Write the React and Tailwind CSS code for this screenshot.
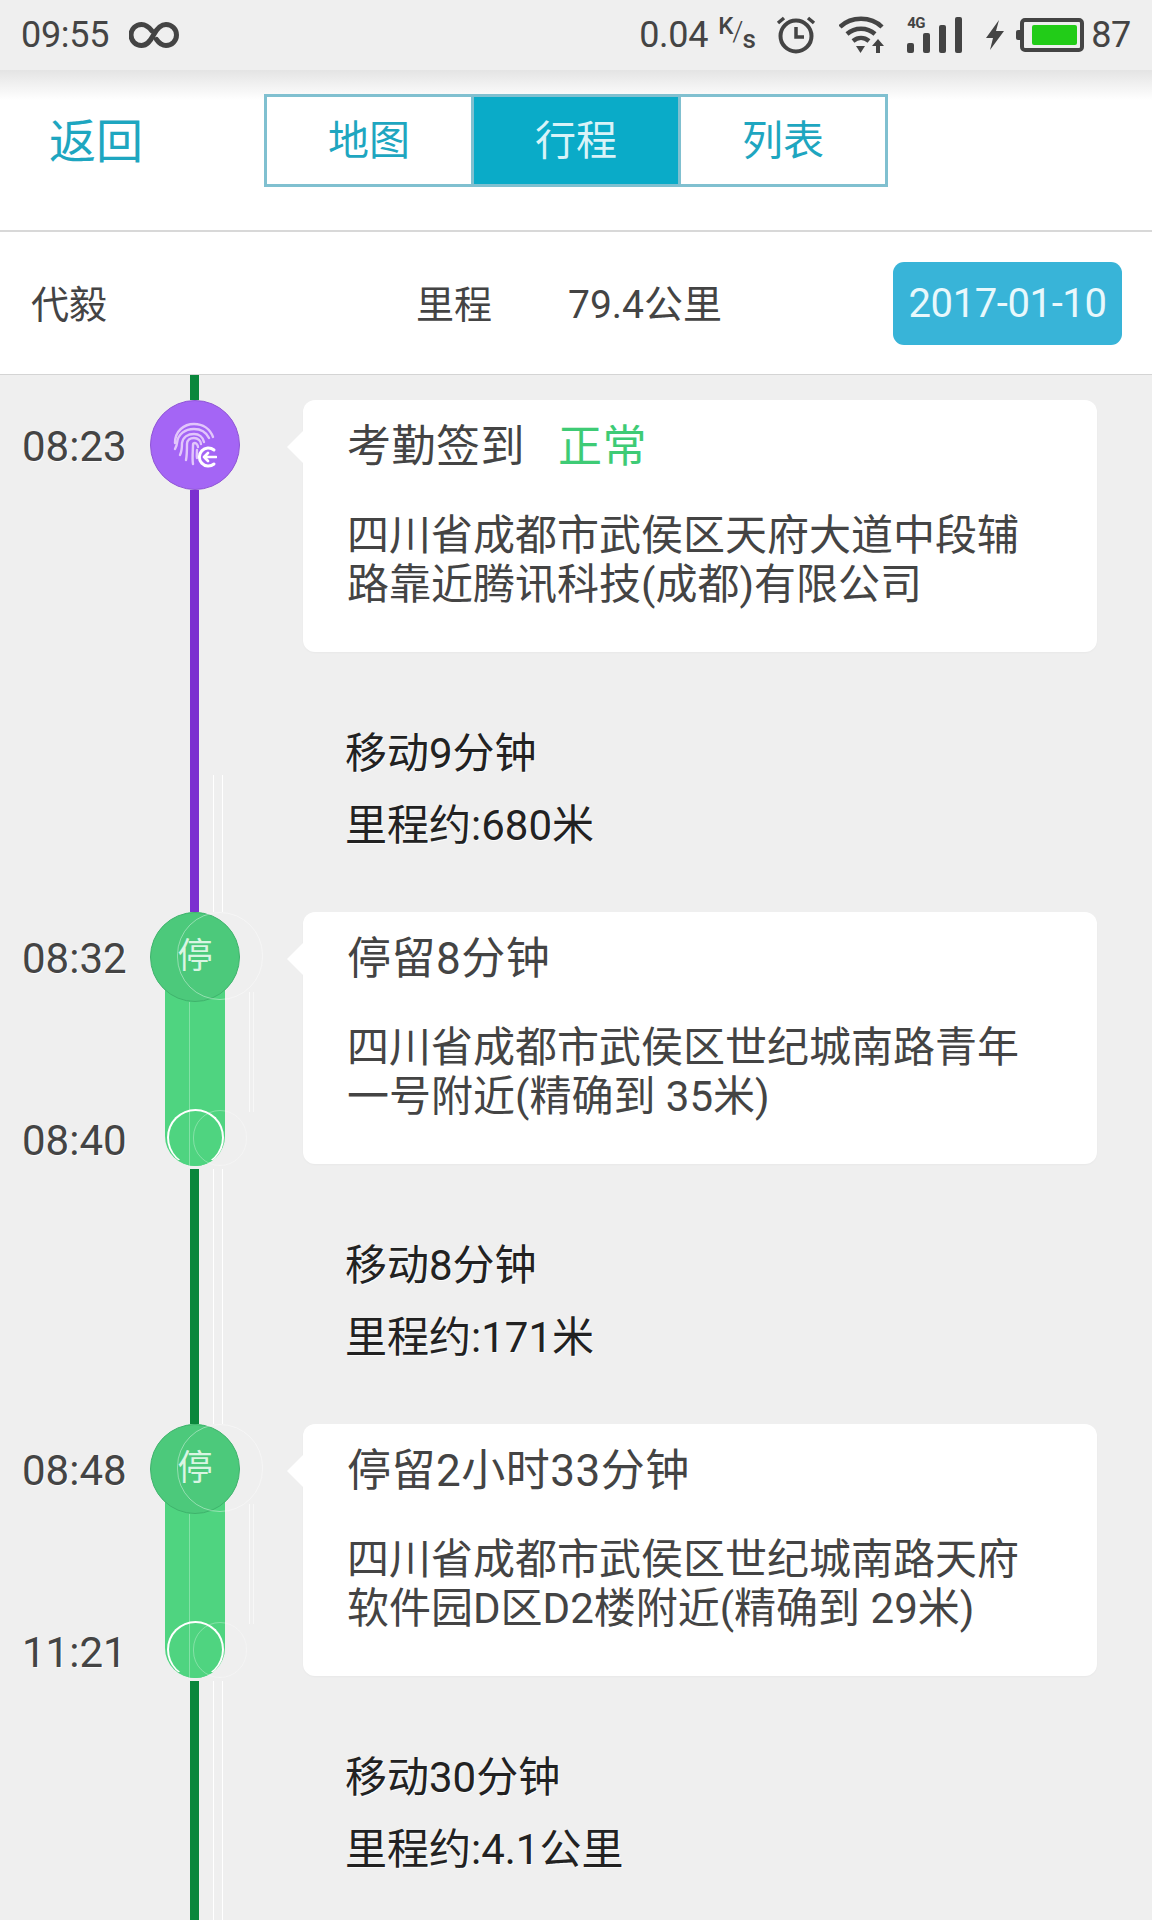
import React from "react";

const FONT = { fontFamily: '"Roboto", "Noto Sans CJK SC", sans-serif' };

const LoopIcon = () => (
  <svg width="50" height="28" viewBox="0 0 50 28" fill="none" stroke="#444" strokeWidth="5" strokeLinecap="round">
    <path d="M23 10C20 6 17 3.500 12.500 3.500a10.500 10.500 0 0 0 0 21c5.500 0 8.500-4 12-10.500 3.500-6.500 7-10.500 12.500-10.500a10.500 10.500 0 0 1 0 21c-4.500 0-7-2.500-9.500-6" />
  </svg>
);

const FingerprintMark = () => (
  <svg width="44" height="46" viewBox="0 0 44 46" fill="none" strokeLinecap="round">
    <g stroke="#e2c6fb" strokeWidth="2.4">
      <path d="M2 21C2 9 11 2 21 2c9 0 16 5 19 13" />
      <path d="M2 27c1-2 2-4 2-6C5 12 12 7 21 7c7 0 12 3 15 9" />
      <path d="M7 33c2-4 2-8 2-12 1-6 6-9 12-9 5 0 9 3 10 8" />
      <path d="M13 38c1-5 1-11 1-16 0-4 3-6 7-6s7 3 7 6" />
      <path d="M20 42c-1-6 0-13 0-19 0-1 1-2 2-2s3 2 3 4" />
      <path d="M24 36c-.5-3 0-6 0-8" />
    </g>
    <path d="M41 28a9 9 0 1 0 0 14" stroke="#ffffff" strokeWidth="3" />
    <path d="M43 35H31m4-4-4 4 4 4" stroke="#ffffff" strokeWidth="2.6" strokeLinejoin="round" />
  </svg>
);

const AlarmIcon = () => (
  <svg width="40" height="40" viewBox="0 0 40 40" fill="none" stroke="#444">
    <circle cx="20" cy="21" r="15.5" strokeWidth="4" />
    <path d="M20 12v10h8" strokeWidth="3.5" />
    <path d="M2 8l6-5M38 8l-6-5" strokeWidth="3.5" />
  </svg>
);

const WifiIcon = () => (
  <svg width="46" height="38" viewBox="0 0 46 38" fill="none">
    <g stroke="#444" strokeWidth="4.5">
      <path d="M1 11C12 0 32 0 43 11" />
      <path d="M8 18c8-7 20-7 28 0" />
      <path d="M14 25c5-4 11-4 16 0" />
    </g>
    <path d="M17 30h9l-4.500 7z" fill="#444" />
    <path d="M39 23l6 7h-4v7h-4v-7h-4z" fill="#444" />
  </svg>
);

const SignalIcon = () => (
  <div className="relative w-[55px] h-[36px] flex items-end gap-[9px]">
    <span className="absolute left-0 -top-[1px] text-[15px] leading-[15px] font-bold tracking-[-0.5px] text-[#444]">4G</span>
    {[10, 20, 28, 36].map((h) => (
      <span key={h} className="w-[7px] rounded-[2px] bg-[#444]" style={{ height: h }} />
    ))}
  </div>
);

const BoltIcon = () => (
  <svg width="18" height="30" viewBox="0 0 18 30">
    <path d="M13 0L0 18h7l-3 12L18 11h-8z" fill="#444" />
  </svg>
);

const Battery = () => (
  <div className="relative shrink-0 w-[64px] h-[34px] ml-[3px] rounded-[5px] border-[4px] border-[#444] p-[3px] pl-[8px] pr-[3px]">
    <span className="absolute -left-[8px] top-[8px] w-[4px] h-[10px] rounded-l-[2px] bg-[#444]" />
    <div className="w-full h-full bg-[#22cc18] rounded-[2px]" />
  </div>
);

const StatusBar = () => (
  <div className="h-[70px] bg-[#efefef] flex items-center justify-between pl-[21px] pr-[21px] text-[#444]">
    <div className="flex items-center gap-[20px]">
      <span className="text-[36px] tracking-[-0.3px]">09:55</span>
      <LoopIcon />
    </div>
    <div className="flex items-center">
      <span className="text-[36px] tracking-[-0.3px]">0.04</span>
      <span className="ml-[10px] w-[35px] flex text-[24px] leading-[24px] font-medium">
        <span className="-translate-y-[9px]">K</span>
        <span className="font-light -translate-y-[3px] text-[28px] -ml-[1px]">/</span>
        <span className="translate-y-[4px] -ml-[1px] text-[26px]">s</span>
      </span>
      <span className="ml-[23px]"><AlarmIcon /></span>
      <span className="ml-[23px]"><WifiIcon /></span>
      <span className="ml-[22px]"><SignalIcon /></span>
      <span className="ml-[24px] mr-[13px]"><BoltIcon /></span>
      <Battery />
      <span className="ml-[7px] text-[36px] tracking-[-0.3px]">87</span>
    </div>
  </div>
);

const Tab = ({ label, active }) => (
  <div
    className={`w-[205px] pt-[3px] flex items-center justify-center text-[41px] ${
      active ? "bg-[#0aabc8] text-[#d8f3f8]" : "bg-white text-[#1ea6c0]"
    }`}
  >
    {label}
  </div>
);

const NavBar = () => (
  <div className="relative h-[162px] bg-white border-b-[2px] border-[#d8d8d8] pb-[3px] flex items-start">
    <div className="absolute left-0 right-0 top-0 h-[30px] bg-gradient-to-b from-[#e4e4e4] to-white" />
    <span className="absolute left-[49px] top-[44px] text-[47px] leading-[56px] text-[#1ea6c0]">返回</span>
    <div className="relative ml-[264px] mt-[24px] h-[93px] w-[624px] flex gap-[3px] bg-[#80c0d0] border-[3px] border-[#80c0d0]">
      <Tab label="地图" />
      <Tab label="行程" active />
      <Tab label="列表" />
    </div>
  </div>
);

const SummaryRow = () => (
  <div className="h-[143px] bg-white border-b-[1px] border-[#d4d4d4] flex items-center pl-[31px] pr-[30px] text-[38px] text-[#444]">
    <span className="w-[385px] pt-[4px]">代毅</span>
    <span className="w-[152px] pt-[4px]">里程</span>
    <span className="flex-1 pt-[4px] text-[39px]">79.4公里</span>
    <div className="w-[229px] h-[83px] mt-[1px] pt-[1px] rounded-[11px] bg-[#38b4d8] text-[40px] text-[#e8f8fc] flex items-center justify-center tracking-[-0.4px]">
      2017-01-10
    </div>
  </div>
);

// stray white outlines left over in the photo around the green nodes
const GhostRings = () => (
  <>
    <div className="absolute left-[27px] top-0 w-[86px] h-[88px] rounded-full border border-white/40" />
    <div className="absolute left-[99px] top-[80px] w-[1px] h-[120px] bg-white/70" />
    <div className="absolute left-[103px] top-[80px] w-[1px] h-[120px] bg-white/50" />
    <div className="absolute left-[43px] top-[198px] w-[54px] h-[56px] rounded-full border border-white/30" />
    <div className="absolute left-[39px] top-[90px] w-[1px] h-[166px] bg-white/30" />
  </>
);

const GhostTrack = ({ top = 0, height }) => (
  <>
    <div className="absolute left-[63px] w-[1px] bg-white" style={{ top, height }} />
    <div className="absolute left-[72px] w-[1px] bg-white" style={{ top, height }} />
  </>
);

const StopNode = ({ stay }) => {
  if (!stay) {
    return (
      <div className="w-[90px] h-[90px] rounded-full bg-[#a465f5] border border-[#8f55d5] flex items-center justify-center">
        <FingerprintMark />
      </div>
    );
  }
  return (
    <div className="relative w-[60px] h-[254px] rounded-[30px] bg-[#4fd480] flex flex-col items-center">
      <div className="shrink-0 w-[90px] h-[90px] rounded-full bg-[#4cc97b] border border-[#3fb36c] flex items-center justify-center text-[35px] text-[#d9f5e3]">
        停
      </div>
      <div className="mt-auto w-[57px] h-[57px] rounded-full bg-[#4fd480] border-t-[2px] border-x-[2px] border-white border-b-[1px] border-b-[#4fd480]" />
    </div>
  );
};

const TimeLabel = ({ children, className = "" }) => (
  <div className={`flex items-center pt-[3px] text-[42px] leading-none text-[#444] [text-shadow:1px_1px_0_rgba(255,255,255,0.8)] ${className}`}>
    {children}
  </div>
);

const Stop = ({ from, to, lineColor, title, status, address, moved, distance, ghostTrack, stay }) => (
  <div className="relative flex h-[512px]">
    <div className="w-[150px] pl-[22px] flex flex-col">
      <TimeLabel className="h-[90px]">{from}</TimeLabel>
      {to && <TimeLabel className="h-[60px] mt-[107px]">{to}</TimeLabel>}
    </div>
    <div className="relative w-[90px] flex flex-col items-center">
      <StopNode stay={stay} />
      {stay && <GhostRings />}
      {ghostTrack && <GhostTrack top={ghostTrack.top} height={ghostTrack.height} />}
      <div className={`w-[9px] mr-[1px] flex-1 ${stay ? "mt-[3px]" : ""}`} style={{ backgroundColor: lineColor }} />
    </div>
    <div className="flex-1 ml-[63px] mr-[55px]">
      <div className="relative h-[252px] rounded-[12px] bg-white pl-[44px] shadow-[0_1px_2px_rgba(0,0,0,0.03)]">
        <span className="absolute -left-[16px] top-[31px] w-0 h-0 border-y-[16px] border-y-transparent border-r-[16px] border-r-white" />
        <div className="h-[90px] pt-[3px] flex items-center text-[44px] tracking-[0.5px] text-[#444]">
          <span>{title}</span>
          {status && <span className="ml-[33px] text-[#3ecb75]">{status}</span>}
        </div>
        <p className="mt-[21px] w-[680px] text-[42px] leading-[49px] text-[#444]">{address}</p>
      </div>
      <div className="pt-[66px] pl-[42px] text-[42px] leading-[72px] text-[#222] [text-shadow:1px_1px_0_rgba(255,255,255,0.8)]">
        <p>{moved}</p>
        <p>{distance}</p>
      </div>
    </div>
  </div>
);

const App = () => (
  <div className="w-[1152px] h-[1920px] overflow-hidden bg-[#efefef]" style={FONT}>
    <StatusBar />
    <NavBar />
    <SummaryRow />
    <div className="flex h-[25px]">
      <div className="w-[150px]" />
      <div className="w-[90px] flex justify-center">
        <div className="w-[9px] mr-[1px] bg-[#0a873c]" />
      </div>
    </div>
    <Stop
      from="08:23"
      lineColor="#7b2fd0"
      title="考勤签到"
      status="正常"
      address="四川省成都市武侯区天府大道中段辅路靠近腾讯科技(成都)有限公司"
      moved="移动9分钟"
      distance="里程约:680米"
      ghostTrack={{ top: 375, height: 137 }}
    />
    <Stop
      stay
      from="08:32"
      to="08:40"
      lineColor="#0a873c"
      title="停留8分钟"
      address="四川省成都市武侯区世纪城南路青年一号附近(精确到 35米)"
      moved="移动8分钟"
      distance="里程约:171米"
      ghostTrack={{ top: 257, height: 255 }}
    />
    <Stop
      stay
      from="08:48"
      to="11:21"
      lineColor="#0a873c"
      title="停留2小时33分钟"
      address="四川省成都市武侯区世纪城南路天府软件园D区D2楼附近(精确到 29米)"
      moved="移动30分钟"
      distance="里程约:4.1公里"
      ghostTrack={{ top: 257, height: 255 }}
    />
  </div>
);

export default App;
